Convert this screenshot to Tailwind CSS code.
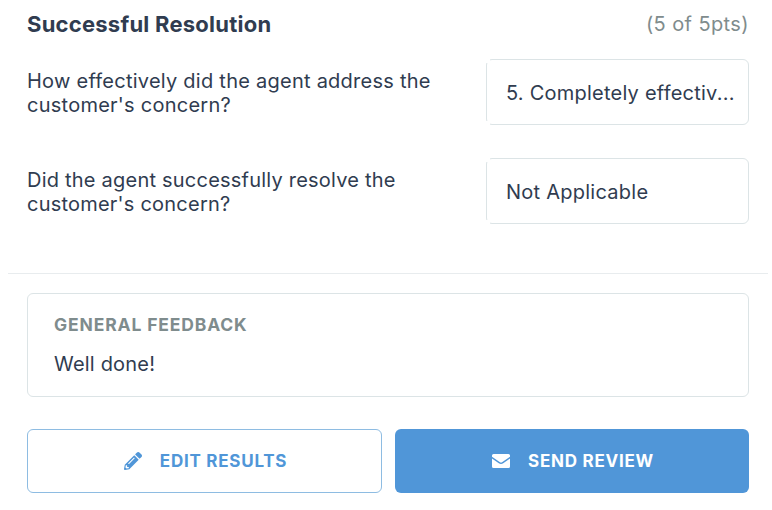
<!DOCTYPE html>
<html lang="en">
<head>
    <meta charset="UTF-8">
    <meta name="viewport" content="width=device-width, initial-scale=1.0">
    <title>Review Results</title>
    <script src="https://cdn.jsdelivr.net/npm/@tailwindcss/browser@4"></script>
</head>
<body class="h-[510px] overflow-hidden bg-white font-['Inter',sans-serif] text-[20px] leading-6 text-[#303c50]">
    <section class="h-[273px] pl-[27px] pr-[23px] pt-3">
        <div class="flex justify-between">
            <h2 class="text-[22px] font-bold tracking-[0.24px]">Successful Resolution</h2>
            <span class="tracking-[0.4px] text-[#7f8c8d]">(5 of 5pts)</span>
        </div>
        <div class="mt-[23px] flex justify-between">
            <p class="pt-2.5 tracking-[0.25px]">How effectively did the agent address the<br>customer's concern?</p>
            <div class="relative flex h-[66px] w-[263px] items-center rounded-md border border-[#dce4e6] pl-[19px] pt-0.5 tracking-[0.23px]">
                <!-- the left corners of the field are open -->
                <span class="absolute -left-px -top-px size-1 bg-white"></span>
                <span class="absolute -bottom-px -left-px size-1 bg-white"></span>
                5. Completely effectiv...
            </div>
        </div>
        <div class="mt-[33px] flex justify-between">
            <p class="pt-2.5 tracking-[0.22px]">Did the agent successfully resolve the<br>customer's concern?</p>
            <div class="relative flex h-[66px] w-[263px] items-center rounded-md border border-[#dce4e6] pl-[19px] pt-0.5 tracking-[0.25px]">
                <span class="absolute -left-px -top-px size-1 bg-white"></span>
                <span class="absolute -bottom-px -left-px size-1 bg-white"></span>
                Not Applicable
            </div>
        </div>
    </section>

    <hr class="ml-2 mr-1 border-[#e8ecee]">

    <section class="pl-[27px] pr-[23px] pt-[19px]">
        <div class="h-[104px] rounded-md border border-[#dce4e6] pl-[26px] pt-[19px]">
            <h3 class="text-[17.5px] font-bold tracking-[0.85px] text-[#7f8c8d]">GENERAL FEEDBACK</h3>
            <p class="mt-[15px] tracking-[0.2px]">Well done!</p>
        </div>
        <div class="mt-8 flex gap-[13px] text-[17px] font-bold tracking-[0.75px]">
            <button class="flex h-16 w-[355px] items-center justify-center gap-[18px] rounded-md border border-[#8ebce2] pl-0.5 text-[#5096d8]">
                <svg class="size-[18px]" viewBox="0 0 512 512" fill="currentColor"><path d="M498 142l-46 46c-5 5-12 5-17 0L324 77c-5-5-5-12 0-17l46-46c19-19 49-19 68 0l60 60c19 19 19 49 0 68zm-214-42L22 362 0 484c-3 16 12 30 28 28l122-22 262-262c5-5 5-12 0-17L301 100c-4-5-12-5-17 0zM124 340c-5-6-5-14 0-20l154-154c6-5 14-5 20 0s5 14 0 20L144 340c-6 5-14 5-20 0zm-36 84h48v36l-64 12-32-32 12-64h36v48z"/></svg>
                EDIT RESULTS
            </button>
            <button class="flex h-16 w-[354px] items-center justify-center gap-[18px] rounded-md bg-[#5096d8] pl-0.5 text-white">
                <svg class="size-[18px]" viewBox="0 0 18 18" fill="currentColor"><path d="M1.5 2h15A1.5 1.5 0 0 1 18 3.5v1.2L10.4 10q-1.4 1-2.8 0L0 4.7V3.5A1.5 1.5 0 0 1 1.5 2zM0 6.5l6.8 4.8q2.2 1.5 4.4 0L18 6.5v8a1.5 1.5 0 0 1-1.5 1.5h-15A1.5 1.5 0 0 1 0 14.500z"/></svg>
                SEND REVIEW
            </button>
        </div>
    </section>
</body>
</html>
